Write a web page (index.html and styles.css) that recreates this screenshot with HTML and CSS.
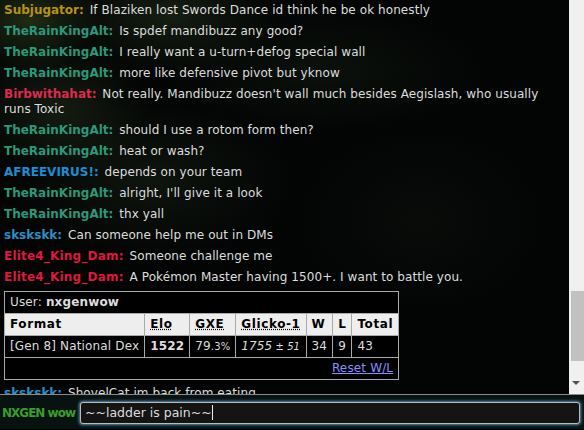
FILE: index.html
```html
<!DOCTYPE html>
<html lang="en">

<head>
    <meta charset="UTF-8">
    <title>Lobby</title>
    <link rel="stylesheet" href="styles.css">
</head>

<body>
    <div class="room">
        <div class="log">
            <div class="chat"><strong class="c-gold">Subjugator:</strong> <em>If Blaziken lost Swords Dance id think he be ok honestly</em></div>
            <div class="chat"><strong class="c-teal">TheRainKingAlt:</strong> <em>Is spdef mandibuzz any good?</em></div>
            <div class="chat"><strong class="c-teal">TheRainKingAlt:</strong> <em>I really want a u-turn+defog special wall</em></div>
            <div class="chat"><strong class="c-teal">TheRainKingAlt:</strong> <em>more like defensive pivot but yknow</em></div>
            <div class="chat"><strong class="c-pink">Birbwithahat:</strong> <em>Not really. Mandibuzz doesn't wall much besides Aegislash, who usually runs Toxic</em></div>
            <div class="chat"><strong class="c-teal">TheRainKingAlt:</strong> <em>should I use a rotom form then?</em></div>
            <div class="chat"><strong class="c-teal">TheRainKingAlt:</strong> <em>heat or wash?</em></div>
            <div class="chat"><strong class="c-blue">AFREEVIRUS!:</strong> <em>depends on your team</em></div>
            <div class="chat"><strong class="c-teal">TheRainKingAlt:</strong> <em>alright, I'll give it a look</em></div>
            <div class="chat"><strong class="c-teal">TheRainKingAlt:</strong> <em>thx yall</em></div>
            <div class="chat"><strong class="c-sky">skskskk:</strong> <em>Can someone help me out in DMs</em></div>
            <div class="chat"><strong class="c-red">Elite4_King_Dam:</strong> <em>Someone challenge me</em></div>
            <div class="chat"><strong class="c-red">Elite4_King_Dam:</strong> <em>A Pokémon Master having 1500+. I want to battle you.</em></div>
            <div class="chat">
                <table class="ladder">
                    <tr>
                        <td colspan="7">User: <strong>nxgenwow</strong></td>
                    </tr>
                    <tr class="head">
                        <th>Format</th>
                        <th><abbr>Elo</abbr></th>
                        <th><abbr>GXE</abbr></th>
                        <th><abbr>Glicko-1</abbr></th>
                        <th>W</th>
                        <th>L</th>
                        <th>Total</th>
                    </tr>
                    <tr>
                        <td>[Gen 8] National Dex</td>
                        <td><strong>1522</strong></td>
                        <td>79<small>.3%</small></td>
                        <td><em>1755<small> ± 51</small></em></td>
                        <td>34</td>
                        <td>9</td>
                        <td>43</td>
                    </tr>
                    <tr>
                        <td colspan="7" class="reset"><a href="#">Reset W/L</a></td>
                    </tr>
                </table>
            </div>
            <div class="chat"><strong class="c-sky">skskskk:</strong> <em>ShovelCat im back from eating</em></div>
        </div>
        <div class="scrollbar">
            <div class="thumb"></div>
            <div class="arrow"></div>
        </div>
    </div>
    <div class="bar">
        <span class="me">NXGEN wow</span>
        <div class="box">~~ladder is pain~~<span class="caret"></span></div>
    </div>
</body>

</html>
```

FILE: styles.css
```css
body {
    margin: 0;
    width: 584px;
    height: 430px;
    overflow: hidden;
    font-family: "DejaVu Sans", Verdana, sans-serif;
    font-size: 12px;
    background: #000;
}

.room {
    display: flex;
    height: 394px;
}

.log {
    flex: 1;
    overflow: hidden;
    background:
        radial-gradient(ellipse 70px 50px at 30px 20px, rgba(50, 70, 34, 0.6), transparent),
        radial-gradient(ellipse 110px 60px at 170px 15px, rgba(36, 52, 30, 0.55), transparent),
        radial-gradient(ellipse 90px 70px at 60px 110px, rgba(34, 48, 28, 0.55), transparent),
        radial-gradient(ellipse 140px 80px at 150px 180px, rgba(26, 36, 24, 0.5), transparent),
        radial-gradient(ellipse 160px 60px at 320px 70px, rgba(22, 32, 22, 0.45), transparent),
        radial-gradient(ellipse 120px 90px at 420px 220px, rgba(16, 22, 16, 0.4), transparent),
        #030504;
}

.chat {
    padding: 3px 24px 3px 4px;
    line-height: 15px;
    color: #ddd;
}

.chat strong {
    font-weight: bold;
}

.chat em {
    font-style: normal;
    margin-left: 2px;
    letter-spacing: 0.08px;
}

.c-gold { color: #b8920f; }
.c-teal { color: #2b987a; }
.c-pink { color: #de2a4c; }
.c-blue { color: #1d8ed4; }
.c-sky { color: #2b8dc6; }
.c-red { color: #df183d; letter-spacing: 0.2px; }

.ladder {
    border-collapse: collapse;
    background: #000;
    color: #ddd;
    font-size: 12px;
}

.ladder td,
.ladder th {
    border: 1px solid #aaa;
    padding: 3px 5px;
    line-height: 15px;
    text-align: left;
    white-space: nowrap;
    letter-spacing: 0.15px;
}

.ladder .head th {
    background: #eee;
    color: #000;
    letter-spacing: 0.6px;
}

.ladder abbr {
    text-decoration: underline dotted;
}

.ladder small {
    font-size: 10px;
}

.ladder em {
    font-style: italic;
    margin: 0;
}

.reset {
    text-align: right !important;
}

.reset a {
    color: #8d8dff;
}

.scrollbar {
    width: 15px;
    background: #f0f0f0;
    display: flex;
    flex-direction: column;
    align-items: flex-end;
}

.thumb {
    margin-top: 291px;
    width: 13px;
    height: 70px;
    background: #c1c1c1;
}

.arrow {
    margin: 20px 4px 0 0;
    width: 0;
    height: 0;
    border-left: 4px solid transparent;
    border-right: 4px solid transparent;
    border-top: 4px solid #505050;
}

.bar {
    height: 35px;
    border-top: 1px solid #8a8a8a;
    background: #081210;
    display: flex;
    align-items: flex-start;
    padding: 7px 4px 0 2px;
    box-sizing: border-box;
}

.me {
    color: #3a9e2a;
    font-weight: bold;
    white-space: nowrap;
    letter-spacing: -1px;
    margin-top: 4px;
    width: 78px;
    flex: none;
}

.box {
    flex: 1;
    height: 20px;
    line-height: 20px;
    padding: 0 4px;
    background: #141414;
    color: #ddd;
    font-size: 12.5px;
    border: 1px solid #bbb;
    border-radius: 3px;
    box-shadow: 0 0 3px 1px #5a8fb8;
}

.caret {
    display: inline-block;
    width: 1px;
    height: 15px;
    background: #eee;
    vertical-align: -3px;
}
```
